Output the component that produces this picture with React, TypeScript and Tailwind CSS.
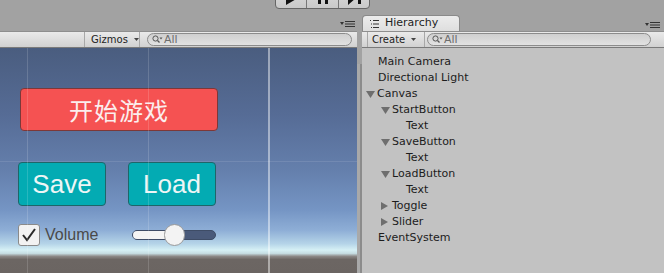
const MenuIcon = () => (
  <svg width="15" height="6" viewBox="0 0 15 6" className="block">
    <polygon points="0,1 4,1 2,4" fill="#333" />
    <rect x="5" y="0" width="10" height="1" fill="#333" />
    <rect x="5" y="2.5" width="10" height="1" fill="#333" />
    <rect x="5" y="5" width="10" height="1" fill="#333" />
  </svg>
);

const Caret = () => (
  <svg width="5" height="3" viewBox="0 0 5 3" className="block ml-[6px]">
    <polygon points="0,0 5,0 2.5,3" fill="#444" />
  </svg>
);

const Search = ({ w }: { w: string }) => (
  <div
    className={`${w} h-[13px] rounded-full border border-[#8c8c8c] bg-[linear-gradient(to_bottom,#cfcfcf,#e2e2e2)] flex items-center pl-[4px] text-[11px] text-[#6c6c6c] leading-none`}
  >
    <svg width="11" height="9" viewBox="0 0 11 9" className="block">
      <circle cx="3.5" cy="3.5" r="2.6" fill="none" stroke="#555" strokeWidth="1" />
      <line x1="5.5" y1="5.5" x2="7.5" y2="7.5" stroke="#555" strokeWidth="1.2" />
      <polygon points="7.5,2.5 10.5,2.5 9,4.5" fill="#555" />
    </svg>
    <span className="ml-[1px]">All</span>
  </div>
);

const Down = () => (
  <svg width="9" height="7" viewBox="0 0 9 7" className="block">
    <polygon points="0,0 9,0 4.5,7" fill="#6e6e6e" />
  </svg>
);

const Right = () => (
  <svg width="7" height="8" viewBox="0 0 7 8" className="block">
    <polygon points="0,0 7,4 0,8" fill="#6e6e6e" />
  </svg>
);

type Row = { label: string; pad: number; arrow?: "down" | "right" };

const rows: Row[] = [
  { label: "Main Camera", pad: 16 },
  { label: "Directional Light", pad: 16 },
  { label: "Canvas", pad: 4, arrow: "down" },
  { label: "StartButton", pad: 19, arrow: "down" },
  { label: "Text", pad: 44 },
  { label: "SaveButton", pad: 19, arrow: "down" },
  { label: "Text", pad: 44 },
  { label: "LoadButton", pad: 19, arrow: "down" },
  { label: "Text", pad: 44 },
  { label: "Toggle", pad: 19, arrow: "right" },
  { label: "Slider", pad: 19, arrow: "right" },
  { label: "EventSystem", pad: 16 },
];

export default function App() {
  return (
    <div className="w-[664px] h-[273px] overflow-hidden bg-[#a2a2a2] flex flex-col font-['DejaVu_Sans',sans-serif]">
      {/* play controls */}
      <div className="h-[15px] shrink-0">
        <div className="ml-[275px] -mt-[14px] w-[95px] h-[23px] flex rounded-b-[4px] border border-[#666] bg-[linear-gradient(to_bottom,#dedede,#c9c9c9)] overflow-hidden">
          <div className="w-[31px] border-r border-[#777] flex items-center justify-center">
            <svg width="12" height="14" viewBox="0 0 12 14" className="block ml-[2px]">
              <polygon points="0,0 12,7 0,14" fill="#111" />
            </svg>
          </div>
          <div className="w-[32px] border-r border-[#777] flex items-center justify-center gap-[4px]">
            <div className="w-[3px] h-[12px] bg-[#111]" />
            <div className="w-[3px] h-[12px] bg-[#111]" />
          </div>
          <div className="flex-1 flex items-center justify-center gap-[2px]">
            <svg width="8" height="14" viewBox="0 0 8 14" className="block">
              <polygon points="0,0 8,7 0,14" fill="#111" />
            </svg>
            <div className="w-[3px] h-[12px] bg-[#111]" />
          </div>
        </div>
      </div>

      <div className="flex flex-1 min-h-0">
        {/* scene / game view */}
        <div className="w-[357px] flex flex-col">
          <div className="h-[16px] flex items-center justify-end pr-[2px] pt-[2px]">
            <MenuIcon />
          </div>
          <div className="h-[17px] flex items-center border-t border-b border-t-[#8e8e8e] border-b-[#7a7a7a] bg-[linear-gradient(to_bottom,#eaeaea,#d1d1d1)]">
            <div className="w-[85px] h-full border-r border-[#a8a8a8]" />
            <div className="w-[55px] h-full flex items-center pl-[6px] border-r border-[#a8a8a8] text-[10px] text-[#222]">
              <span>Gizmos</span>
              <Caret />
            </div>
            <div className="ml-[7px]">
              <Search w="w-[205px]" />
            </div>
          </div>
          <div className="relative flex-1 bg-[linear-gradient(to_bottom,#4a5d7f_0%,#566c96_30%,#6580ad_55%,#7595c4_72%,#8eaed6_81%,#b5d4e8_87%,#d6f0f5_89.8%,#c6dde2_91.3%,#8c8886_92.6%,#6c6663_94%,#6b6562_100%)]">
            <div className="flex flex-col pl-[20px] pt-[40px]">
              <div className="w-[198px] h-[43px] rounded-[4px] bg-[#f55252] border border-[#7d3838] flex items-center justify-center text-[24px] text-[#fbeeee] font-['Noto_Sans_CJK_SC',sans-serif] tracking-[1px]">
                开始游戏
              </div>
              <div className="flex gap-[22px] -ml-[2px] mt-[31px] font-['Liberation_Sans',sans-serif]">
                <div className="w-[88px] h-[44px] rounded-[4px] bg-[#03abb3] border border-[#1e6669] flex items-center justify-center text-[26px] text-[#eef6f6]">
                  Save
                </div>
                <div className="w-[88px] h-[44px] rounded-[4px] bg-[#03abb3] border border-[#1e6669] flex items-center justify-center text-[26px] text-[#eef6f6]">
                  Load
                </div>
              </div>
              <div className="flex items-center -ml-[2px] mt-[17px] font-['Liberation_Sans',sans-serif]">
                <div className="w-[114px] flex items-center">
                  <div className="w-[22px] h-[22px] rounded-[3px] bg-[#f2f2f2] border border-[#8a8a8a] flex items-center justify-center">
                    <svg width="16" height="14" viewBox="0 0 16 14" className="block">
                      <polyline points="2,7 6,12 14,1" fill="none" stroke="#2a2a2a" strokeWidth="2" />
                    </svg>
                  </div>
                  <span className="ml-[5px] text-[16px] text-[#4a4a4a]">Volume</span>
                </div>
                <div className="relative w-[84px] h-[10px] rounded-full bg-[#4a5a7a] border border-[#3e4c66]">
                  <div className="h-full w-[41px] rounded-l-full bg-[#f4f4f4]" />
                  <div className="absolute left-[31px] -top-[7px] w-[21px] h-[22px] rounded-full bg-[#f3f3f3] border border-[#9a9a9a]" />
                </div>
              </div>
            </div>
            {/* grid overlay */}
            <div className="absolute top-0 bottom-0 left-[27px] w-px bg-white/15" />
            <div className="absolute top-0 bottom-0 left-[148px] w-px bg-white/15" />
            <div className="absolute top-0 bottom-0 left-[268px] w-[2px] bg-white/45" />
            <div className="absolute left-0 right-0 top-[113px] h-px bg-white/10" />
          </div>
        </div>

        {/* divider */}
        <div className="w-[5px] flex flex-col">
          <div className="h-[49px]" />
          <div className="flex-1 flex">
            <div className="w-[3px] bg-[#a9a9a9]" />
            <div className="flex-1 bg-[#8c8c8c]" />
          </div>
        </div>

        {/* hierarchy */}
        <div className="flex-1 flex flex-col">
          <div className="h-[16px] flex items-end justify-between">
            <div className="w-[98px] h-[16px] rounded-t-[4px] border border-b-0 border-[#8a8a8a] bg-[linear-gradient(to_bottom,#ececec,#dedede)] flex items-center pl-[7px]">
              <svg width="9" height="8" viewBox="0 0 9 8" className="block">
                <rect x="0" y="0" width="1" height="1" fill="#333" />
                <rect x="3" y="0" width="6" height="1" fill="#333" />
                <rect x="1" y="3.5" width="1" height="1" fill="#333" />
                <rect x="3" y="3.5" width="6" height="1" fill="#333" />
                <rect x="1" y="7" width="1" height="1" fill="#333" />
                <rect x="3" y="7" width="6" height="1" fill="#333" />
              </svg>
              <span className="ml-[6px] text-[11px] text-[#1e1e1e]">Hierarchy</span>
            </div>
            <div className="pr-[4px] pb-[3px]">
              <MenuIcon />
            </div>
          </div>
          <div className="h-[17px] flex items-center border-t border-b border-t-[#8e8e8e] border-b-[#7a7a7a] bg-[linear-gradient(to_bottom,#eaeaea,#d1d1d1)]">
            <div className="w-[6px] h-full border-r border-[#a8a8a8]" />
            <div className="w-[57px] h-full flex items-center pl-[4px] border-r border-[#a8a8a8] text-[10px] text-[#222]">
              <span>Create</span>
              <Caret />
            </div>
            <div className="ml-[2px]">
              <Search w="w-[224px]" />
            </div>
          </div>
          <div className="flex-1 bg-[#c2c2c2] pt-[6px]">
            {rows.map((r, i) => (
              <div
                key={i}
                className="h-[16px] flex items-center text-[11px] text-[#1c1c1c] leading-[16px]"
                style={{ paddingLeft: r.pad }}
              >
                {r.arrow && (
                  <div className="w-[11px] flex items-center">
                    {r.arrow === "down" ? <Down /> : <Right />}
                  </div>
                )}
                <span>{r.label}</span>
              </div>
            ))}
          </div>
        </div>
      </div>
    </div>
  );
}
